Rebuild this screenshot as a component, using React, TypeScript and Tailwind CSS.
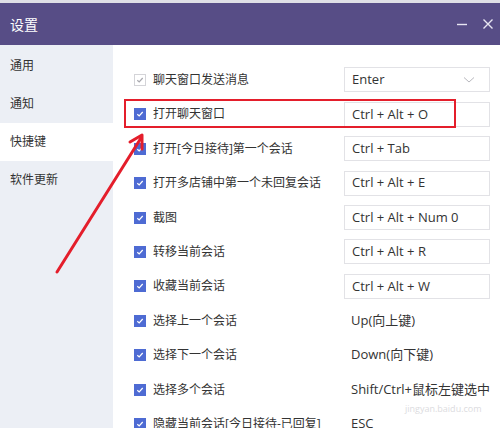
import React from 'react';

const font = { fontFamily: '"Open Sans", "Noto Sans CJK SC", sans-serif' };

const rows: { label: string; key: string; box: boolean; disabled?: boolean; select?: boolean }[] = [
  { label: '聊天窗口发送消息', key: 'Enter', box: true, disabled: true, select: true },
  { label: '打开聊天窗口', key: 'Ctrl + Alt + O', box: true },
  { label: '打开[今日接待]第一个会话', key: 'Ctrl + Tab', box: true },
  { label: '打开多店铺中第一个未回复会话', key: 'Ctrl + Alt + E', box: true },
  { label: '截图', key: 'Ctrl + Alt + Num 0', box: true },
  { label: '转移当前会话', key: 'Ctrl + Alt + R', box: true },
  { label: '收藏当前会话', key: 'Ctrl + Alt + W', box: true },
  { label: '选择上一个会话', key: 'Up(向上键)', box: false },
  { label: '选择下一个会话', key: 'Down(向下键)', box: false },
  { label: '选择多个会话', key: 'Shift/Ctrl+鼠标左键选中', box: false },
  { label: '隐藏当前会话[今日接待-已回复]', key: 'ESC', box: false },
];

const menu = ['通用', '通知', '快捷键', '软件更新'];

const Check: React.FC<{ disabled?: boolean }> = ({ disabled }) => (
  <div
    className={
      'w-3 h-3 flex items-center justify-center shrink-0 ' +
      (disabled ? 'bg-white border border-[#d4d4d8]' : 'bg-[#4e6bd3]')
    }
  >
    <svg width="8" height="8" viewBox="0 0 8 8">
      <path d="M1.3 4.2 L3.2 6 L6.7 2" fill="none" stroke={disabled ? '#a8a8ae' : '#fff'} strokeWidth="1.2" />
    </svg>
  </div>
);

export default function App() {
  return (
    <div className="relative w-[500px] h-[428px] overflow-hidden bg-white" style={font}>
      <div className="h-[3px] bg-[#dfdfe6]" />
      <div className="h-[42px] bg-[#574d86] flex items-center justify-between pl-[10px] pr-[6px]">
        <span className="text-[14px] text-white">设置</span>
        <div className="flex items-center gap-[14px] text-[#e8e6f2]">
          <svg width="12" height="12" viewBox="0 0 12 12">
            <path d="M1 6.5 H11" stroke="currentColor" strokeWidth="1.4" />
          </svg>
          <svg width="12" height="12" viewBox="0 0 12 12">
            <path d="M1.5 1.5 L10.5 10.5 M10.5 1.5 L1.5 10.5" stroke="currentColor" strokeWidth="1.4" />
          </svg>
        </div>
      </div>
      <div className="flex h-[383px]">
        <div className="w-[113px] bg-[#eceff5] pt-[2px]">
          {menu.map((m, i) => (
            <div
              key={m}
              className={'h-[38px] flex items-center pl-[10px] text-[12px] text-[#333] ' + (i === 2 ? 'bg-white' : '')}
            >
              {m}
            </div>
          ))}
        </div>
        <div className="flex-1 pt-[17.8px] pl-[21px]">
          {rows.map((r) => (
            <div key={r.label} className="h-[34.4px] flex items-center">
              <Check disabled={r.disabled} />
              <span className="ml-[7px] w-[191px] text-[12px] text-[#333] whitespace-nowrap">{r.label}</span>
              {r.box ? (
                <div className="w-[146px] h-[25px] border border-[#e2e2e6] flex items-center justify-between pl-[7px] pr-[14px] text-[13px] text-[#333]">
                  <span>{r.key}</span>
                  {r.select && (
                    <svg width="12" height="8" viewBox="0 0 12 8">
                      <path d="M1 1.5 L6 6 L11 1.5" fill="none" stroke="#b8b8be" strokeWidth="1" />
                    </svg>
                  )}
                </div>
              ) : (
                <span className="pl-[7px] text-[13px] text-[#333] whitespace-nowrap">{r.key}</span>
              )}
            </div>
          ))}
        </div>
      </div>
      <div className="absolute left-[124px] top-[99px] w-[332px] h-[29px] border-2 border-[#e41e2b]" />
      <svg className="absolute left-0 top-0" width="500" height="428" viewBox="0 0 500 428">
        <path d="M57 272 L141 138" stroke="#e41e2b" strokeWidth="3" strokeLinecap="round" fill="none" />
        <path d="M130 142 L142 135 L142 149" stroke="#e41e2b" strokeWidth="3" strokeLinecap="round" strokeLinejoin="round" fill="none" />
      </svg>
      <div className="absolute left-[405px] top-[404px] text-[9px] text-[#dcdce0] leading-none">jingyan.baidu.com</div>
    </div>
  );
}
